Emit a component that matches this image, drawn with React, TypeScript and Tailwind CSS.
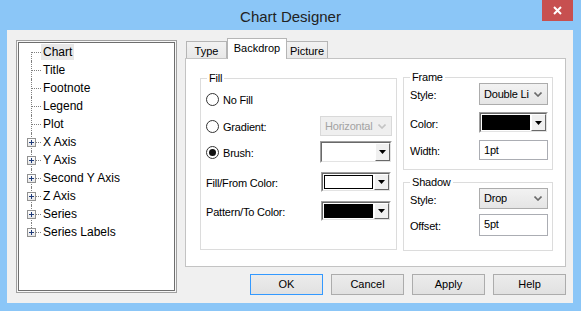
import React from 'react';

/* ------------------------------------------------------------------ */
/*  Data                                                               */
/* ------------------------------------------------------------------ */

const TREE_ITEMS: { label: string; expandable?: boolean; selected?: boolean }[] = [
  { label: 'Chart', selected: true },
  { label: 'Title' },
  { label: 'Footnote' },
  { label: 'Legend' },
  { label: 'Plot' },
  { label: 'X Axis', expandable: true },
  { label: 'Y Axis', expandable: true },
  { label: 'Second Y Axis', expandable: true },
  { label: 'Z Axis', expandable: true },
  { label: 'Series', expandable: true },
  { label: 'Series Labels', expandable: true },
];

/* ------------------------------------------------------------------ */
/*  Small controls                                                     */
/* ------------------------------------------------------------------ */

function Chevron({ color }: { color: string }) {
  return (
    <svg width="8" height="5" viewBox="0 0 8 5" className="shrink-0">
      <polyline points="0.5,0.5 4,4 7.5,0.5" fill="none" stroke={color} strokeWidth="1.6" />
    </svg>
  );
}

function Combo({ value, disabled, className }: { value: string; disabled?: boolean; className: string }) {
  return (
    <div
      className={
        disabled
          ? `flex items-center justify-between border border-[#d9d9d9] bg-[#efefef] pl-[4px] pr-[5px] text-[#a3a3a3] ${className}`
          : `flex items-center justify-between border border-[#acacac] bg-gradient-to-b from-[#f2f2f2] to-[#e5e5e5] pl-[4px] pr-[5px] text-black ${className}`
      }
    >
      <span className="overflow-hidden whitespace-nowrap">{value}</span>
      <Chevron color={disabled ? '#c4c4c4' : '#6b6b6b'} />
    </div>
  );
}

function DropButton() {
  return (
    <div className="flex h-full w-[15px] shrink-0 items-center justify-center border border-t-white border-l-white border-b-[#696969] border-r-[#696969] bg-[#f0f0f0]">
      <svg width="7" height="4" viewBox="0 0 7 4">
        <polygon points="0,0 7,0 3.5,4" fill="#000" />
      </svg>
    </div>
  );
}

function ColorCombo({ swatch, className }: { swatch?: string; className: string }) {
  return (
    <div className={`border border-t-[#a0a0a0] border-l-[#a0a0a0] border-b-white border-r-white ${className}`}>
      <div className="flex h-full items-stretch border border-t-[#696969] border-l-[#696969] border-b-[#e3e3e3] border-r-[#e3e3e3] bg-white">
        <div className="flex-1 p-px">
          {swatch && <div className="h-full w-full border border-black" style={{ backgroundColor: swatch }} />}
        </div>
        <DropButton />
      </div>
    </div>
  );
}

function TextBox({ value, className }: { value: string; className: string }) {
  return (
    <div className={`border border-[#abadb3] bg-white pl-[4px] pt-[3px] leading-[13px] ${className}`}>{value}</div>
  );
}

function Radio({ label, checked }: { label: string; checked?: boolean }) {
  return (
    <div className="flex items-center gap-[4px]">
      <div className="flex h-[13px] w-[13px] items-center justify-center rounded-full border border-[#333] bg-white">
        {checked && <div className="h-[7px] w-[7px] rounded-full bg-[#111]" />}
      </div>
      <span className="pt-[2px]">{label}</span>
    </div>
  );
}

function GroupBox({ title, className, children }: { title: string; className: string; children: React.ReactNode }) {
  return (
    <div className={`relative border border-[#dcdcdc] ${className}`}>
      <span className="absolute -top-[8px] left-[6px] bg-white px-[2px] leading-[14px]">{title}</span>
      {children}
    </div>
  );
}

function PushButton({ label, isDefault }: { label: string; isDefault?: boolean }) {
  return (
    <div
      className={
        isDefault
          ? 'flex h-[21px] w-[73px] items-center justify-center border border-[#3399ff] bg-gradient-to-b from-[#ececec] to-[#e1e1e1]'
          : 'flex h-[21px] w-[73px] items-center justify-center border border-[#acacac] bg-gradient-to-b from-[#ececec] to-[#e1e1e1]'
      }
    >
      {label}
    </div>
  );
}

/* ------------------------------------------------------------------ */
/*  Tree                                                               */
/* ------------------------------------------------------------------ */

function TreeRow({ item, index, count }: { item: (typeof TREE_ITEMS)[number]; index: number; count: number }) {
  const first = index === 0;
  const last = index === count - 1;
  return (
    <div className="flex h-[18px] items-center">
      <div className="relative h-full w-[22px] shrink-0">
        <div
          className={
            first
              ? 'absolute left-[12px] top-[9px] bottom-0 border-l border-dotted border-[#808080]'
              : last
              ? 'absolute left-[12px] top-0 h-[9px] border-l border-dotted border-[#808080]'
              : 'absolute left-[12px] top-0 bottom-0 border-l border-dotted border-[#808080]'
          }
        />
        <div className="absolute left-[13px] top-[9px] w-[9px] border-t border-dotted border-[#808080]" />
        {item.expandable && (
          <div className="absolute left-[8px] top-[5px] flex h-[9px] w-[9px] items-center justify-center border border-[#919191] bg-gradient-to-b from-white to-[#e6e6e6]">
            <svg width="5" height="5" viewBox="0 0 5 5">
              <rect x="0" y="2" width="5" height="1" fill="#1f3b7a" />
              <rect x="2" y="0" width="1" height="5" fill="#1f3b7a" />
            </svg>
          </div>
        )}
      </div>
      <span className={item.selected ? 'bg-[#e8e8e8] px-[2px] leading-[16px]' : 'px-[2px] leading-[16px]'}>
        {item.label}
      </span>
    </div>
  );
}

/* ------------------------------------------------------------------ */
/*  App                                                                */
/* ------------------------------------------------------------------ */

export default function App() {
  return (
    <div className="flex h-[311px] w-[581px] flex-col bg-[#8bc6f7] font-['Liberation_Sans',Arial,sans-serif] text-[11px] text-black">
      {/* Title bar */}
      <div className="grid h-[30px] grid-cols-[1fr_auto_1fr]">
        <div />
        <div className="pt-[7px] text-[15px] leading-[20px] text-[#222]">Chart Designer</div>
        <div className="flex justify-end pr-[8px]">
          <div className="flex h-[21px] w-[31px] items-center justify-center bg-[#c75050]">
            <svg width="9" height="9" viewBox="0 0 9 9">
              <path d="M1 1L8 8M8 1L1 8" stroke="#fff" strokeWidth="2" />
            </svg>
          </div>
        </div>
      </div>

      {/* Client area */}
      <div className="ml-[7px] flex h-[273px] w-[566px] bg-[#f0f0f0]">
        {/* Tree */}
        <div className="ml-[9px] mt-[10px] h-[253px] w-[161px] border border-[#a0a0a0] bg-[#f7f7f7] p-px">
          <div className="h-full w-full border border-[#6e6e6e] bg-white text-[12px]">
            {TREE_ITEMS.map((item, i) => (
              <TreeRow key={item.label} item={item} index={i} count={TREE_ITEMS.length} />
            ))}
          </div>
        </div>

        {/* Right column */}
        <div className="ml-[8px] mt-[8px] flex w-[381px] flex-col">
          {/* Tabs */}
          <div className="flex h-[20px] items-end pl-px">
            <div className="flex h-[17px] w-[41px] items-center justify-center border border-b-0 border-[#b5b5b5] bg-gradient-to-b from-[#f2f2f2] to-[#e8e8e8] pt-[2px]">
              Type
            </div>
            <div className="relative z-10 -mb-px flex h-[21px] w-[60px] items-center justify-center border border-b-0 border-[#b5b5b5] bg-white pb-[2px]">
              Backdrop
            </div>
            <div className="flex h-[17px] w-[41px] items-center justify-center border border-b-0 border-l-0 border-[#b5b5b5] bg-gradient-to-b from-[#f2f2f2] to-[#e8e8e8] pt-[2px]">
              Picture
            </div>
          </div>

          {/* Tab pane */}
          <div className="flex h-[209px] w-[381px] gap-[6px] border border-[#c3c3c3] bg-white pl-[14px] pt-[19px] tracking-[-0.2px]">
            {/* Fill */}
            <GroupBox title="Fill" className="h-[172px] w-[197px]">
              <div className="flex flex-col pl-[5px] pr-[4px]">
                <div className="mt-[10px] flex h-[20px] items-center">
                  <Radio label="No Fill" />
                </div>
                <div className="mt-[7px] flex h-[20px] items-center justify-between">
                  <Radio label="Gradient:" />
                  <Combo value="Horizontal" disabled className="h-[20px] w-[72px]" />
                </div>
                <div className="mt-[5px] flex h-[22px] items-center justify-between">
                  <Radio label="Brush:" checked />
                  <ColorCombo className="h-[22px] w-[72px]" />
                </div>
                <div className="mt-[9px] flex h-[20px] items-center justify-between">
                  <span className="pt-[2px]">Fill/From Color:</span>
                  <ColorCombo swatch="#ffffff" className="mr-px h-[20px] w-[70px]" />
                </div>
                <div className="mt-[9px] flex h-[20px] items-center justify-between">
                  <span className="pt-[2px]">Pattern/To Color:</span>
                  <ColorCombo swatch="#000000" className="mr-px h-[20px] w-[70px]" />
                </div>
              </div>
            </GroupBox>

            {/* Frame + Shadow */}
            <div className="-mt-px flex flex-col">
              <GroupBox title="Frame" className="h-[93px] w-[150px]">
                <div className="flex flex-col pl-[6px] pr-[4px]">
                  <div className="mt-[5px] flex h-[22px] items-center justify-between">
                    <span className="pt-[3px]">Style:</span>
                    <Combo value="Double Li" className="h-[22px] w-[69px]" />
                  </div>
                  <div className="mt-[7px] flex h-[21px] items-center justify-between">
                    <span className="pt-[4px]">Color:</span>
                    <ColorCombo swatch="#000000" className="h-[21px] w-[69px]" />
                  </div>
                  <div className="mt-[7px] flex h-[20px] items-center justify-between">
                    <span className="pt-[3px]">Width:</span>
                    <TextBox value="1pt" className="h-[20px] w-[69px]" />
                  </div>
                </div>
              </GroupBox>
              <GroupBox title="Shadow" className="mt-[12px] h-[69px] w-[150px]">
                <div className="flex flex-col pl-[6px] pr-[4px]">
                  <div className="mt-[5px] flex h-[21px] items-center justify-between">
                    <span className="pt-[4px]">Style:</span>
                    <Combo value="Drop" className="h-[21px] w-[69px]" />
                  </div>
                  <div className="mt-[5px] flex h-[22px] items-center justify-between">
                    <span className="pt-[2px]">Offset:</span>
                    <TextBox value="5pt" className="h-[22px] w-[69px]" />
                  </div>
                </div>
              </GroupBox>
            </div>
          </div>

          {/* Buttons */}
          <div className="mt-[7px] flex justify-end gap-[8px]">
            <PushButton label="OK" isDefault />
            <PushButton label="Cancel" />
            <PushButton label="Apply" />
            <PushButton label="Help" />
          </div>
        </div>
      </div>
    </div>
  );
}
